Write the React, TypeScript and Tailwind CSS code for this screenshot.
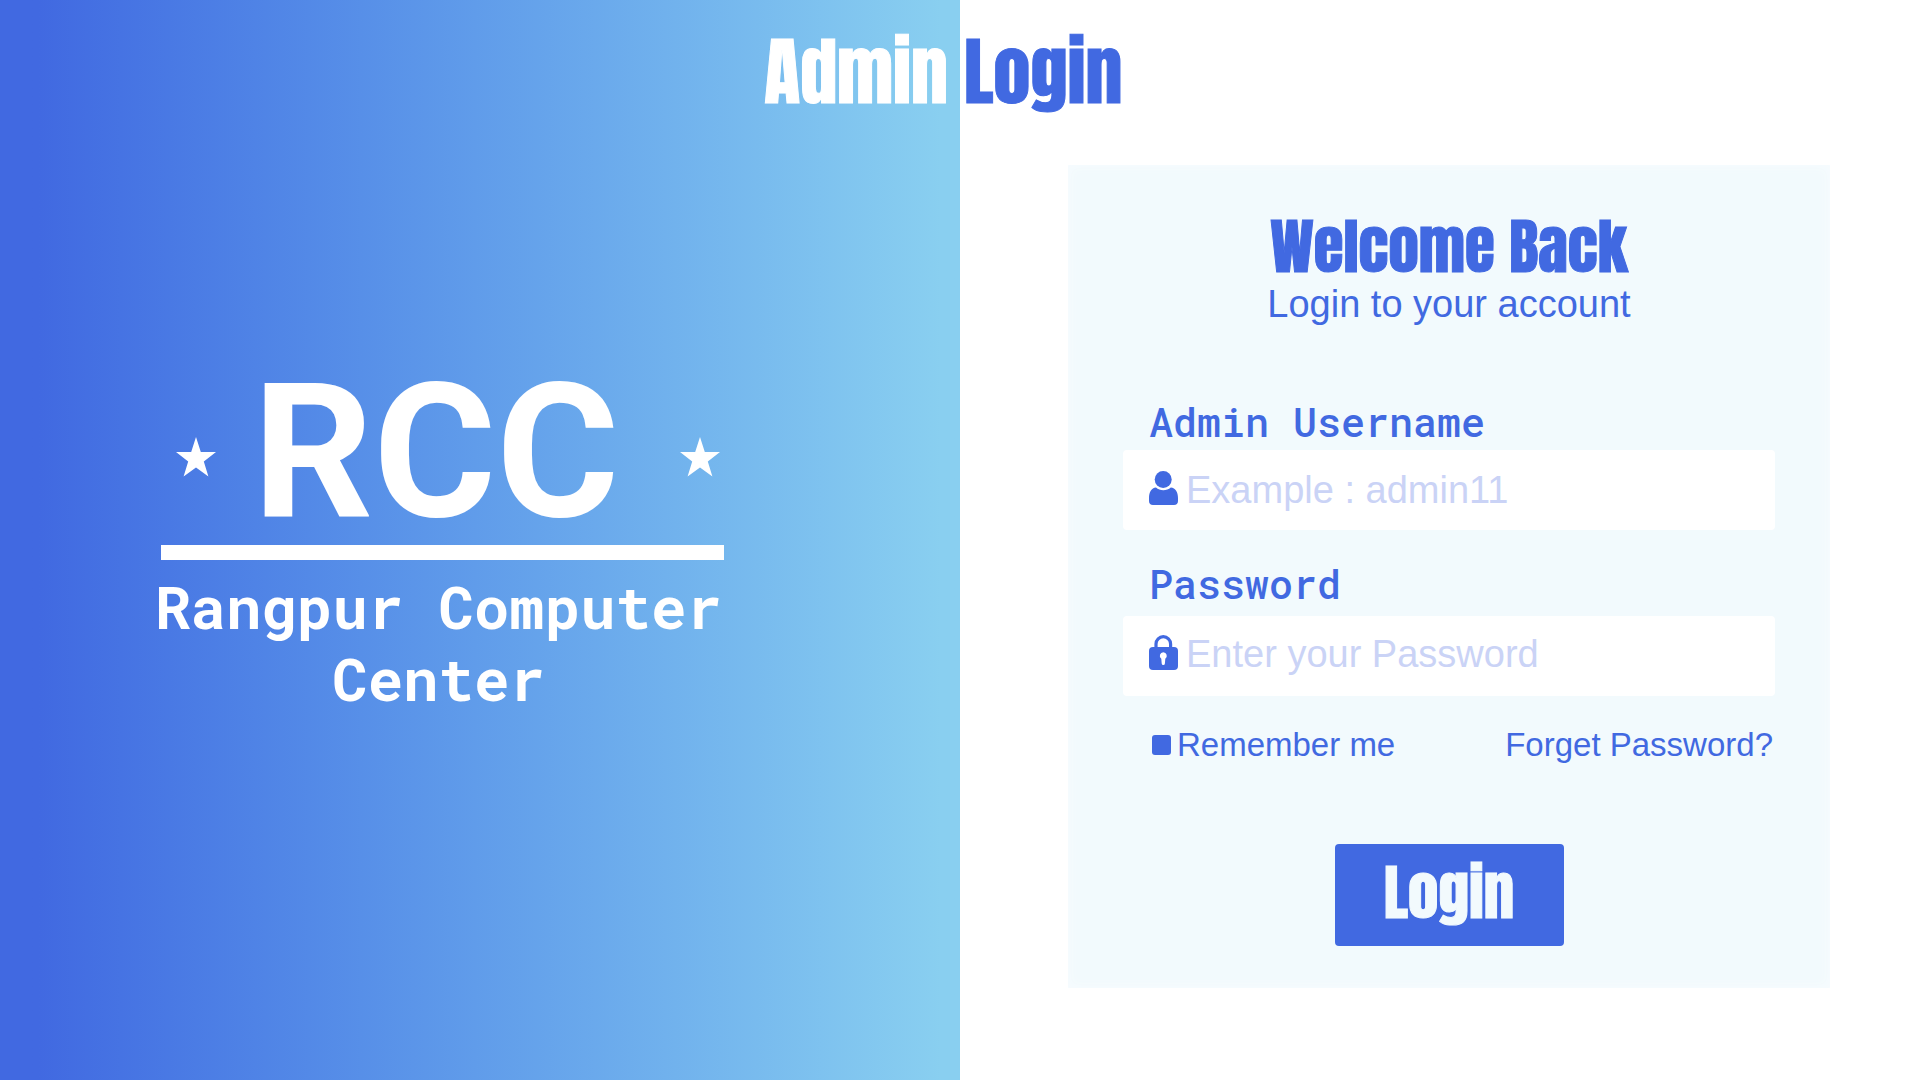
import type { ReactNode } from "react";

const heavy = "font-['Anton','Impact',sans-serif] font-normal [-webkit-text-stroke:1px_currentColor]";
const sans = "font-['Liberation_Sans',Arial,sans-serif]";
const mono = "font-['Roboto_Mono','DejaVu_Sans_Mono',monospace]";

function Star() {
  return (
    <svg viewBox="0 0 40 40" className="mt-[10px] h-10 w-10 shrink-0 fill-white" aria-hidden="true">
      <path d="M20 0L24.8 15H40L27.8 24.4L32.4 39.6L20 30.4L7.6 39.6L12.2 24.4L0 15H15.2Z" />
    </svg>
  );
}

function UserIcon() {
  return (
    <svg viewBox="0 0 29 34" className="mb-1 h-[34px] w-[29px] shrink-0 fill-[#4169e1]" aria-hidden="true">
      <circle cx="14.2" cy="8.5" r="8.5" />
      <path d="M7 16.6C9 18.4 11.5 19.3 14.3 19.3S19.8 18.4 21.8 16.6C26.5 16.9 29 21.5 29 27V30C29 32.5 27.5 34 25 34H4C1.5 34 0 32.5 0 30V27C0 21.5 2.4 16.9 7 16.6Z" />
    </svg>
  );
}

function LockIcon() {
  return (
    <svg viewBox="0 0 29 35" className="mb-1 h-[35px] w-[29px] shrink-0" aria-hidden="true">
      <path d="M7 14V9a7.3 7.3 0 0 1 14.6 0V14" fill="none" stroke="#4169e1" strokeWidth="3.2" />
      <rect y="12" width="29" height="23" rx="4" fill="#4169e1" />
      <path d="M14.3 17.3a3.6 3.6 0 0 0-2 6.5L12.7 28.5q.1 1.6 1.6 1.6t1.6-1.6L16.3 23.8a3.6 3.6 0 0 0-2-6.5Z" fill="#fff" />
    </svg>
  );
}

type FieldProps = {
  id: string;
  label: string;
  labelClass: string;
  boxClass: string;
  type: string;
  placeholder: string;
  icon: ReactNode;
};

function Field({ id, label, labelClass, boxClass, type, placeholder, icon }: FieldProps) {
  return (
    <div className="flex flex-col">
      <label htmlFor={id} className={`${mono} ${labelClass} ml-[26px] text-[40px] leading-[52px] font-medium`}>
        {label}
      </label>
      <div className={`${boxClass} flex h-20 items-center gap-2 rounded bg-white pl-[26px]`}>
        {icon}
        <input
          id={id}
          type={type}
          placeholder={placeholder}
          className={`${sans} h-full min-w-0 flex-1 bg-transparent text-[38px] outline-none placeholder:text-[#cad3f6]`}
        />
      </div>
    </div>
  );
}

export default function App() {
  return (
    <main className="grid min-h-screen grid-cols-2 bg-white text-[#4169e1]">
      <section className="flex flex-col bg-linear-to-r from-[#4169e1] from-4% to-[#89cff0] to-98% text-white">
        <h1 className={`${heavy} pt-6 pr-3 text-right text-[74px] leading-[96px]`}>Admin</h1>
        <div className="mt-[239px] ml-[161px] flex w-[563px] flex-col">
          <div className="flex items-center justify-between pr-1 pl-[15px]">
            <Star />
            <p className="pr-6 font-['Roboto',sans-serif] text-[188px] leading-[186px] font-bold">RCC</p>
            <Star />
          </div>
          <div className="h-[15px] bg-white" />
          <p className={`${mono} -mr-1 -ml-3 pt-[10px] text-center text-[59px] leading-[72px] font-bold`}>
            Rangpur Computer Center
          </p>
        </div>
      </section>

      <section className="flex flex-col">
        <h1 className={`${heavy} pt-6 pl-1 text-[74px] leading-[96px]`}>Login</h1>
        <form
          onSubmit={(event) => event.preventDefault()}
          className="mt-[45px] mr-[90px] mb-[92px] ml-[108px] flex flex-col bg-[#f2fafd] px-[55px] pt-12 pb-[42px] shadow-[inset_0_0_12px_#f8fcff]"
        >
          <h2 className={`${heavy} pb-1 text-center text-[61px] leading-[66px]`}>Welcome Back</h2>
          <p className={`${sans} text-center text-[38px] leading-[42px]`}>Login to your account</p>
          <div className="mt-[71px] flex flex-col gap-7">
            <Field id="username" label="Admin Username" labelClass="pb-[2px]" boxClass="" type="text" placeholder="Example : admin11" icon={<UserIcon />} />
            <Field id="password" label="Password" labelClass="pb-[6px]" boxClass="pb-[3px]" type="password" placeholder="Enter your Password" icon={<LockIcon />} />
          </div>
          <div className={`${sans} mt-7 flex items-center justify-between pr-[2px] pl-[29px] text-[33px] leading-[42px]`}>
            <label htmlFor="remember" className="flex items-center gap-[6px]">
              <input id="remember" type="checkbox" className="h-5 w-[19px] appearance-none rounded-[3px] bg-[#4169e1]" />
              Remember me
            </label>
            <a href="#forgot">Forget Password?</a>
          </div>
          <button
            type="submit"
            className={`${heavy} mt-[78px] h-[102px] w-[229px] self-center rounded bg-[#4169e1] pb-[6px] text-[61px] leading-[80px] text-[#f2fafd]`}
          >
            Login
          </button>
        </form>
      </section>
    </main>
  );
}
